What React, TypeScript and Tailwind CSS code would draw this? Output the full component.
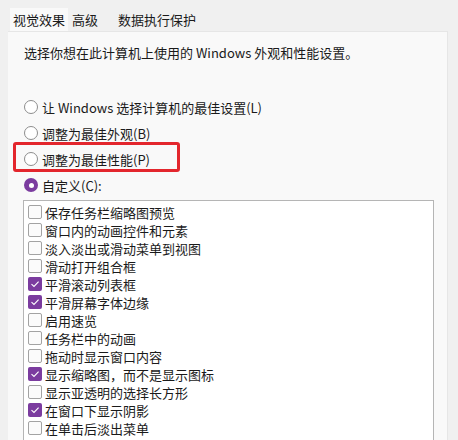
const options = [
  { label: "保存任务栏缩略图预览", checked: false },
  { label: "窗口内的动画控件和元素", checked: false },
  { label: "淡入淡出或滑动菜单到视图", checked: false },
  { label: "滑动打开组合框", checked: false },
  { label: "平滑滚动列表框", checked: true },
  { label: "平滑屏幕字体边缘", checked: true },
  { label: "启用速览", checked: false },
  { label: "任务栏中的动画", checked: false },
  { label: "拖动时显示窗口内容", checked: false },
  { label: "显示缩略图，而不是显示图标", checked: true },
  { label: "显示亚透明的选择长方形", checked: false },
  { label: "在窗口下显示阴影", checked: true },
  { label: "在单击后淡出菜单", checked: false },
];

const radios = [
  { label: "让 Windows 选择计算机的最佳设置(L)", selected: false },
  { label: "调整为最佳外观(B)", selected: false },
  { label: "调整为最佳性能(P)", selected: false },
  { label: "自定义(C):", selected: true },
];

const Radio = ({ selected }: { selected: boolean }) =>
  selected ? (
    <span className="w-[14px] h-[14px] rounded-full bg-[#7b3c9f] flex items-center justify-center shrink-0">
      <span className="w-[5px] h-[5px] rounded-full bg-white" />
    </span>
  ) : (
    <span className="w-[14px] h-[14px] rounded-full border border-[#8d8d8d] bg-white shrink-0" />
  );

const Checkbox = ({ checked }: { checked: boolean }) =>
  checked ? (
    <span className="w-[14px] h-[14px] rounded-[2px] bg-[#7b3c9f] flex items-center justify-center shrink-0">
      <svg width="10" height="10" viewBox="0 0 10 10" fill="none">
        <path d="M1.5 5.2 L4 7.5 L8.6 2.6" stroke="white" strokeWidth="1.1" />
      </svg>
    </span>
  ) : (
    <span className="w-[14px] h-[14px] rounded-[2px] border border-[#a3a3a3] bg-[#fbfbfb] shrink-0" />
  );

export default function App() {
  return (
    <div
      className="relative w-[458px] h-[440px] bg-[#f0f0f0] overflow-hidden text-[13px] text-[#1a1a1a] flex flex-col"
      style={{ fontFamily: '"Noto Sans CJK SC", "Noto Sans", sans-serif' }}
    >
      {/* Tabs */}
      <div className="flex items-end h-[31px] pl-[10px] shrink-0">
        <div className="h-[23px] px-[3px] bg-[#f9f9f9] flex items-center leading-none">视觉效果</div>
        <div className="h-[23px] pl-[4px] pr-[20px] flex items-center leading-none">高级</div>
        <div className="h-[23px] flex items-center leading-none">数据执行保护</div>
      </div>

      {/* Panel */}
      <div className="ml-[8px] w-[440px] flex-1 bg-[#f9f9f9] border-t border-[#e6e6e6] border-r pt-[12px]">
        <p className="pl-[16px] leading-[18px]">选择你想在此计算机上使用的 Windows 外观和性能设置。</p>

        <div className="mt-[32px] flex flex-col">
          {radios.map((r) => (
            <div key={r.label} className="h-[26px] pl-[16px] flex items-center gap-[4px]">
              <Radio selected={r.selected} />
              <span className="leading-none">{r.label}</span>
            </div>
          ))}
        </div>

        {/* List */}
        <div className="mt-[2px] ml-[15px] w-[411px] h-[260px] border border-[#b5b5b5] bg-white pt-[2px] pl-[4px]">
          {options.map((o) => (
            <div key={o.label} className="h-[18px] flex items-center gap-[3px]">
              <Checkbox checked={o.checked} />
              <span className="leading-none">{o.label}</span>
            </div>
          ))}
        </div>
      </div>

      {/* Annotation highlight */}
      <div className="absolute left-[13px] top-[142px] w-[167px] h-[30px] border-[3px] border-[#e3262d] rounded-[3px]" />
    </div>
  );
}
